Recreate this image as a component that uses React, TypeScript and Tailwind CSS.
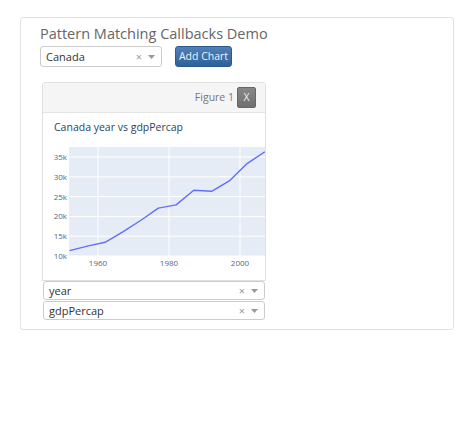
import React from "react";

const data: [number, number][] = [
  [1952, 11367], [1957, 12490], [1962, 13462], [1967, 16077], [1972, 18971],
  [1977, 22091], [1982, 22899], [1987, 26627], [1992, 26343], [1997, 28955],
  [2002, 33329], [2007, 36319],
];

const xs = (yr: number) => 55 + (yr - 1960) * 3.55;
const ys = (v: number) => 143 - (v / 1000 - 10) * 3.96;

function Chevron() {
  return (
    <svg width="7" height="4" viewBox="0 0 7 4" className="block">
      <path d="M0 0 L7 0 L3.5 4 Z" fill="#999" />
    </svg>
  );
}

function Select({ value, className }: { value: string; className: string }) {
  return (
    <div className={`flex items-center border border-[#ccc] rounded-[3px] bg-white ${className}`}>
      <span className="flex-1 pl-[5px] text-[11px] text-[#333] leading-none">{value}</span>
      <span className="text-[11px] text-[#999] leading-none mr-[6px]">×</span>
      <span className="mr-[6px]"><Chevron /></span>
    </div>
  );
}

function Chart() {
  const pts = data.map(([x, y]) => `${xs(x).toFixed(1)},${ys(y).toFixed(1)}`).join(" ");
  const yTicks = [10, 15, 20, 25, 30, 35];
  const xTicks = [1960, 1980, 2000];
  return (
    <svg width="222" height="167" viewBox="0 0 222 167" className="block" style={{ fontFamily: "'Open Sans', sans-serif" }}>
      <text x="11" y="18" fontSize="10.5" fill="#2a3f5f">Canada year vs gdpPercap</text>
      <rect x="26" y="34" width="200" height="109" fill="#e5ecf6" />
      {yTicks.map((t) => (
        <line key={t} x1="26" x2="222" y1={ys(t * 1000)} y2={ys(t * 1000)} stroke="#fff" strokeWidth="1" />
      ))}
      {xTicks.map((t) => (
        <line key={t} x1={xs(t)} x2={xs(t)} y1="34" y2="143" stroke="#fff" strokeWidth="1" />
      ))}
      {yTicks.map((t) => (
        <text key={t} x="24" y={ys(t * 1000) + 3} fontSize="8" fill="#56667f" textAnchor="end">{t}k</text>
      ))}
      {xTicks.map((t) => (
        <text key={t} x={xs(t)} y="153" fontSize="8" fill="#56667f" textAnchor="middle">{t}</text>
      ))}
      <polyline points={pts} fill="none" stroke="#636efa" strokeWidth="1.4" strokeLinejoin="round" />
    </svg>
  );
}

export default function App() {
  return (
    <div className="w-[474px] h-[426px] bg-white pt-[17px] pl-[20px]" style={{ fontFamily: "'Open Sans', sans-serif" }}>
      <div className="w-[434px] h-[313px] border border-[#e3e3e3] rounded-[3px] pl-[19px] pt-[5px]">
        <h1 className="text-[14.5px] text-[#666] leading-[22px] font-normal">Pattern Matching Callbacks Demo</h1>
        <div className="flex items-center mt-[1px] h-[21px]">
          <Select value="Canada" className="w-[122px] h-[21px]" />
          <button className="ml-[13px] w-[57px] h-[21px] rounded-[3px] border border-[#2c5a8c] bg-gradient-to-b from-[#4f80b8] to-[#2f6198] text-[10.5px] text-[#eef3f9] leading-none">
            Add Chart
          </button>
        </div>
        <div className="mt-[15px] ml-[2px] w-[224px]">
          <div className="border border-[#e0e0e0] rounded-t-[3px]">
            <div className="h-[30px] bg-[#f5f5f5] border-b border-[#e5e5e5] flex items-center justify-end pr-[9px]">
              <span className="text-[10.5px] text-[#777] mr-[3px]">Figure 1</span>
              <span className="w-[19px] h-[21px] rounded-[2px] bg-gradient-to-b from-[#888] to-[#6f6f6f] border border-[#666] flex items-center justify-center text-[10.5px] text-[#f0f0f0] leading-none">X</span>
            </div>
            <div className="overflow-hidden">
              <Chart />
            </div>
          </div>
          <div className="pl-[1px]">
            <Select value="year" className="w-[222px] h-[19px]" />
            <Select value="gdpPercap" className="w-[222px] h-[19px] mt-[1px]" />
          </div>
        </div>
      </div>
    </div>
  );
}
